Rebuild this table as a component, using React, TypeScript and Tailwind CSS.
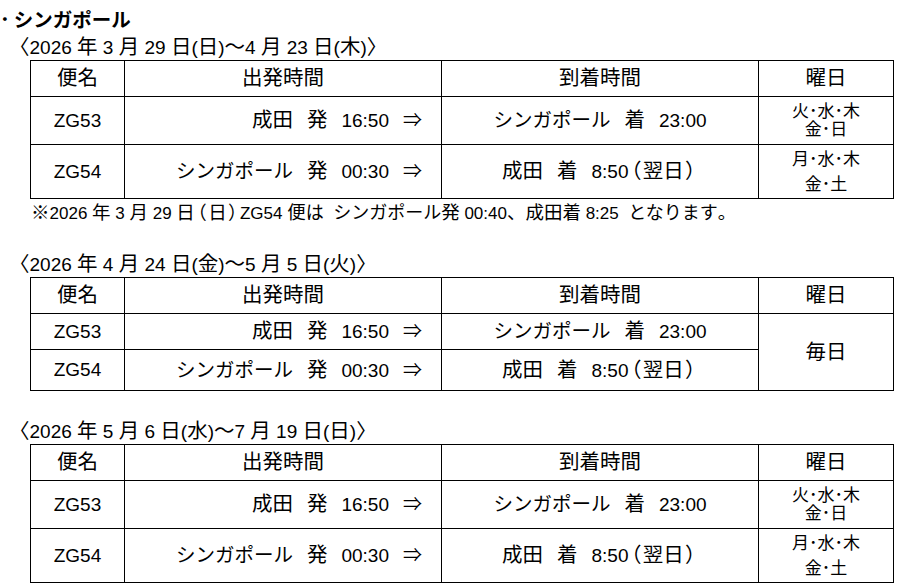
import React from "react";

// full-width runs get a slightly larger size, like the MS Gothic look of the original
const RUN_RE = /([（）]|[\u3040-\u30FF]+|[\u3000-\u303F\u4E00-\u9FFF\uFF01-\uFF07\uFF0A-\uFF60※]+)/;
const KANA_RE = /^[\u3040-\u30FF]+$/;

type Sizes = { kanji: string; kana: string };
const TABLE: Sizes = { kanji: "text-[20.5px]", kana: "text-[19.5px]" };
const NOTE: Sizes = { kanji: "text-[18.5px]", kana: "text-[18px]" };

const jp = (text: string, s: Sizes = TABLE) =>
  text.split(RUN_RE).map((part, i) => {
    if (i % 2 === 0) return part;
    if (part === "（" || part === "）")
      return (
        <span key={i} className={`${s.kanji} mx-[2px] [font-feature-settings:'palt']`}>
          {part}
        </span>
      );
    return (
      <span key={i} className={KANA_RE.test(part) ? s.kana : s.kanji}>
        {part}
      </span>
    );
  });

type Row = {
  flight: string;
  dep: string[];
  arr: string[];
  h: string;
  days?: string[];
  lead?: string;
};

type Section = {
  range: string;
  rows: Row[];
  everyday?: boolean;
};

const ZG53 = { flight: "ZG53", dep: ["成田", "発", "16:50", "⇒"], arr: ["シンガポール", "着", "23:00"] };
const ZG54 = { flight: "ZG54", dep: ["シンガポール", "発", "00:30", "⇒"], arr: ["成田", "着", "8:50（翌日）"] };

const sections: Section[] = [
  {
    range: "〈2026 年 3 月 29 日(日)〜4 月 23 日(木)〉",
    rows: [
      { ...ZG53, h: "h-[48px]", days: ["火･水･木", "金･日"], lead: "leading-[18px]" },
      { ...ZG54, h: "h-[54px]", days: ["月･水･木", "金･土"], lead: "leading-[25px]" },
    ],
  },
  {
    range: "〈2026 年 4 月 24 日(金)〜5 月 5 日(火)〉",
    everyday: true,
    rows: [
      { ...ZG53, h: "h-[36px]" },
      { ...ZG54, h: "h-[41px]" },
    ],
  },
  {
    range: "〈2026 年 5 月 6 日(水)〜7 月 19 日(日)〉",
    rows: [
      { ...ZG53, h: "h-[48px]", days: ["火･水･木", "金･日"], lead: "leading-[18px]" },
      { ...ZG54, h: "h-[54px]", days: ["月･水･木", "金･土"], lead: "leading-[25px]" },
    ],
  },
];

const Parts = ({ parts }: { parts: string[] }) => (
  <span className="inline-flex items-baseline gap-[14px] whitespace-nowrap">
    {parts.map((p) => (
      <span key={p}>{p === "⇒" ? p : jp(p)}</span>
    ))}
  </span>
);

const FlightTable = ({ section }: { section: Section }) => {
  return (
    <>
      <div className="h-[26px] pl-[9px] leading-[26px] whitespace-nowrap">{jp(section.range)}</div>
      <table className="ml-[30px] w-[864px] table-fixed border-collapse">
        <colgroup>
          <col className="w-[94px]" />
          <col className="w-[317px]" />
          <col className="w-[317px]" />
          <col />
        </colgroup>
        <thead>
          <tr className="h-[36px]">
            <th className="border border-black p-0 font-normal">{jp("便名")}</th>
            <th className="border border-black p-0 font-normal">{jp("出発時間")}</th>
            <th className="border border-black p-0 font-normal">{jp("到着時間")}</th>
            <th className="border border-black p-0 font-normal">{jp("曜日")}</th>
          </tr>
        </thead>
        <tbody>
          {section.rows.map((row, i) => (
            <tr key={row.flight} className={row.h}>
              <td className="border border-black p-0 text-center">{row.flight}</td>
              <td className="border border-black p-0 pr-[19px] text-right">
                <Parts parts={row.dep} />
              </td>
              <td className="border border-black p-0 text-center">
                <Parts parts={row.arr} />
              </td>
              {section.everyday ? (
                i === 0 && (
                  <td rowSpan={2} className="border border-black p-0 text-center">
                    {jp("毎日")}
                  </td>
                )
              ) : (
                <td className={`border border-black p-0 text-center text-[17px] ${row.lead}`}>
                  {row.days?.map((d) => (
                    <div key={d}>{d}</div>
                  ))}
                </td>
              )}
            </tr>
          ))}
        </tbody>
      </table>
    </>
  );
};

export default function App() {
  return (
    <div className="h-[585px] w-[902px] overflow-hidden bg-white text-[19px] leading-[24px] text-black font-['Liberation_Sans','Noto_Sans_CJK_JP',sans-serif]">
      <div className="pt-[6px] text-[19.5px] leading-[28px] font-bold">
        <span className="mr-[4px]">･</span>シンガポール
      </div>

      <FlightTable section={sections[0]} />
      <div className="mt-[3px] pl-[31px] text-[17px] leading-[22px] whitespace-pre">
        {jp("※2026 年 3 月 29 日（日）ZG54 便は  シンガポール発 00:40、成田着 8:25  となります。", NOTE)}
      </div>

      <div className="mt-[26px]">
        <FlightTable section={sections[1]} />
      </div>

      <div className="mt-[27px]">
        <FlightTable section={sections[2]} />
      </div>
    </div>
  );
}
